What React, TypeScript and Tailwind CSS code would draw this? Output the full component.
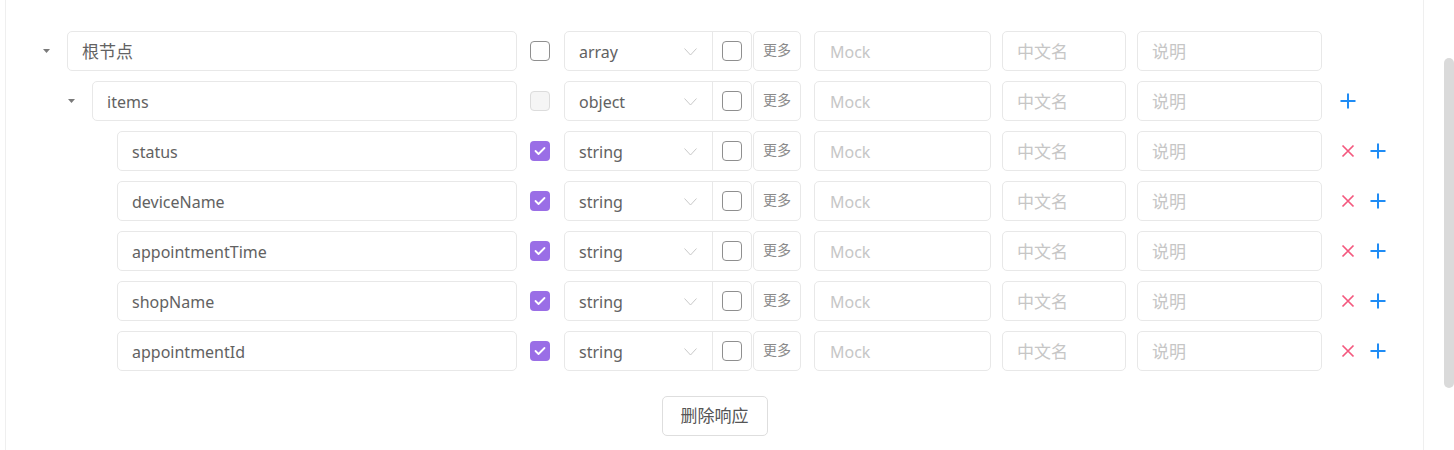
import React from "react";

type Row = {
  name: string;
  type: string;
  level: 0 | 1 | 2;
  req: "off" | "disabled" | "on";
  icons: "none" | "plus" | "both";
};

const rows: Row[] = [
  { name: "根节点", type: "array", level: 0, req: "off", icons: "none" },
  { name: "items", type: "object", level: 1, req: "disabled", icons: "plus" },
  { name: "status", type: "string", level: 2, req: "on", icons: "both" },
  { name: "deviceName", type: "string", level: 2, req: "on", icons: "both" },
  { name: "appointmentTime", type: "string", level: 2, req: "on", icons: "both" },
  { name: "shopName", type: "string", level: 2, req: "on", icons: "both" },
  { name: "appointmentId", type: "string", level: 2, req: "on", icons: "both" },
];

const font = { fontFamily: '"Noto Sans", "Noto Sans CJK SC", sans-serif' };

function Caret() {
  return (
    <svg width="7" height="4" viewBox="0 0 7 4" className="block">
      <path d="M0 0 L7 0 L3.5 4 Z" fill="#7a7a7a" />
    </svg>
  );
}

function Chevron() {
  return (
    <svg width="13" height="8" viewBox="0 0 13 8" className="block">
      <path d="M0.5 0.5 L6.5 7 L12.5 0.5" fill="none" stroke="#c8c8c8" strokeWidth="1" />
    </svg>
  );
}

function Checkbox({ state }: { state: "off" | "disabled" | "on" }) {
  if (state === "on") {
    return (
      <div className="w-5 h-5 rounded-[4px] bg-[#9a6ee6] flex items-center justify-center">
        <svg width="12" height="10" viewBox="0 0 12 10">
          <path d="M1.5 5 L4.5 8 L10.5 2" fill="none" stroke="#ffffff" strokeWidth="1.8" strokeLinecap="round" strokeLinejoin="round" />
        </svg>
      </div>
    );
  }
  if (state === "disabled") {
    return <div className="w-5 h-5 rounded-[4px] border border-[#dcdcdc] bg-[#f5f5f5]" />;
  }
  return <div className="w-5 h-5 rounded-[4px] border border-[#8f8f8f] bg-white" />;
}

function XIcon() {
  return (
    <svg width="16" height="16" viewBox="0 0 16 16" className="block">
      <path d="M2.5 2.5 L13.5 13.5 M13.5 2.5 L2.5 13.5" stroke="#f4587e" strokeWidth="1.7" />
    </svg>
  );
}

function PlusIcon() {
  return (
    <svg width="16" height="16" viewBox="0 0 16 16" className="block">
      <path d="M8 0.5 L8 15.5 M0.5 8 L15.5 8" stroke="#1f8cf5" strokeWidth="2" />
    </svg>
  );
}

function SchemaRow({ row }: { row: Row }) {
  const lead =
    row.level === 0 ? (
      <div className="flex items-center">
        <div className="w-[37px]" />
        <Caret />
        <div className="w-[17px]" />
      </div>
    ) : row.level === 1 ? (
      <div className="flex items-center">
        <div className="w-[62px]" />
        <Caret />
        <div className="w-[17px]" />
      </div>
    ) : (
      <div className="w-[111px]" />
    );
  const nameW = row.level === 0 ? "w-[450px]" : row.level === 1 ? "w-[425px]" : "w-[400px]";
  const isCjk = row.level === 0;
  return (
    <div className="flex items-center h-10 mb-[10px]">
      {lead}
      <div
        className={`${nameW} h-10 border border-[#e8e8e8] rounded-[5px] flex items-center pl-[14px] pt-[1px] ${
          isCjk ? "text-[17px]" : "text-[16px]"
        } text-[#626262]`}
      >
        {row.name}
      </div>
      <div className="w-[13px]" />
      <Checkbox state={row.req} />
      <div className="w-[14px]" />
      <div className="flex h-10 w-[188px] border border-[#e8e8e8] rounded-[5px]">
        <div className="w-[148px] border-r border-[#e8e8e8] flex items-center justify-between pl-[14px] pr-[15px] pt-[1px] text-[16px] text-[#626262]">
          <span>{row.type}</span>
          <Chevron />
        </div>
        <div className="flex-1 flex items-center justify-center">
          <Checkbox state="off" />
        </div>
      </div>
      <div className="w-px" />
      <div className="w-[48px] h-10 border border-[#e8e8e8] rounded-[5px] flex justify-center pt-[7px] text-[14px] text-[#8a8a8a]">
        更多
      </div>
      <div className="w-[13px]" />
      <div className="w-[177px] h-10 border border-[#e8e8e8] rounded-[5px] flex items-center pl-[15px] pt-[1px] text-[16px] text-[#c6c6c6]">
        Mock
      </div>
      <div className="w-[11px]" />
      <div className="w-[124px] h-10 border border-[#e8e8e8] rounded-[5px] flex items-center pl-[14px] pt-[1px] text-[17px] text-[#c6c6c6]">
        中文名
      </div>
      <div className="w-[11px]" />
      <div className="w-[185px] h-10 border border-[#e8e8e8] rounded-[5px] flex items-center pl-[14px] pt-[1px] text-[17px] text-[#c6c6c6]">
        说明
      </div>
      <div className="w-[18px]" />
      {row.icons === "plus" && <PlusIcon />}
      {row.icons === "both" && (
        <div className="flex items-center gap-[14px]">
          <XIcon />
          <PlusIcon />
        </div>
      )}
    </div>
  );
}

export default function App() {
  return (
    <div className="w-[1454px] h-[450px] bg-white flex overflow-hidden" style={font}>
      <div className="w-[5px]" />
      <div className="w-[1419px] h-[450px] border-x border-[#efefef] pt-[31px]">
        {rows.map((r, i) => (
          <SchemaRow key={i} row={r} />
        ))}
        <div className="flex justify-center pt-[15px]">
          <div className="w-[106px] h-10 border border-[#dedede] rounded-[5px] flex items-center justify-center text-[17px] text-[#555555]">
            删除响应
          </div>
        </div>
      </div>
      <div className="flex-1 flex justify-end">
        <div className="w-[10px] h-[330px] mt-[58px] rounded-full bg-[#dadada]" />
      </div>
    </div>
  );
}
